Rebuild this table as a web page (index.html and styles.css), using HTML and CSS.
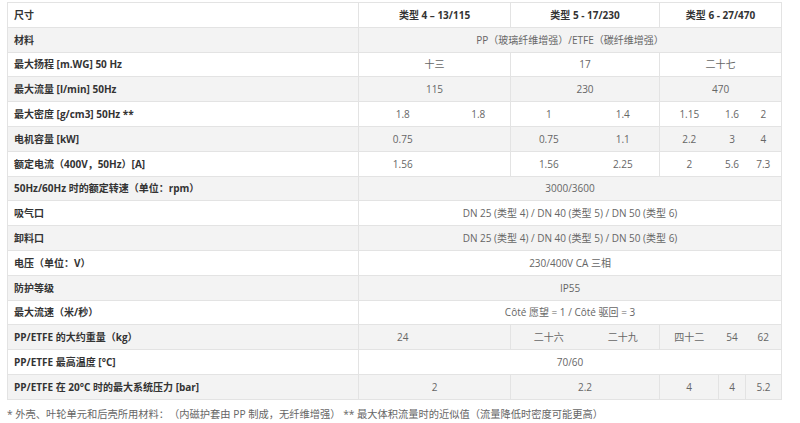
FILE: index.html
```html
<!DOCTYPE html>
<html lang="zh">
<head>
<meta charset="utf-8">
<link rel="stylesheet" href="styles.css">
</head>
<body>
<div class="page">
<table class="spec">
<colgroup>
<col class="w-label"><col class="w-a"><col class="w-b"><col class="w-c"><col class="w-d"><col class="w-e"><col class="w-f"><col class="w-g">
</colgroup>
<tbody>
<tr class="head"><td class="lbl">尺寸</td><td colspan="2">类型 4 – 13/115</td><td colspan="2">类型 5 - 17/230</td><td colspan="3">类型 6 - 27/470</td></tr>
<tr class="alt"><td class="lbl">材料</td><td colspan="7">PP（玻璃纤维增强）/ETFE（碳纤维增强）</td></tr>
<tr><td class="lbl">最大扬程 [m.WG] 50 Hz</td><td colspan="2">十三</td><td colspan="2">17</td><td colspan="3">二十七</td></tr>
<tr class="alt"><td class="lbl">最大流量 [l/min] 50Hz</td><td colspan="2">115</td><td colspan="2">230</td><td colspan="3">470</td></tr>
<tr><td class="lbl">最大密度 [g/cm3] 50Hz **</td><td>1.8</td><td class="c">1.8</td><td>1</td><td class="c">1.4</td><td>1.15</td><td class="c">1.6</td><td class="c">2</td></tr>
<tr class="alt"><td class="lbl">电机容量 [kW]</td><td>0.75</td><td class="c"></td><td>0.75</td><td class="c">1.1</td><td>2.2</td><td class="c">3</td><td class="c">4</td></tr>
<tr><td class="lbl">额定电流（400V，50Hz）[A]</td><td>1.56</td><td class="c"></td><td>1.56</td><td class="c">2.25</td><td>2</td><td class="c">5.6</td><td class="c">7.3</td></tr>
<tr class="alt"><td class="lbl">50Hz/60Hz 时的额定转速（单位：rpm）</td><td colspan="7">3000/3600</td></tr>
<tr><td class="lbl">吸气口</td><td colspan="7">DN 25 (类型 4) / DN 40 (类型 5) / DN 50 (类型 6)</td></tr>
<tr class="alt"><td class="lbl">卸料口</td><td colspan="7">DN 25 (类型 4) / DN 40 (类型 5) / DN 50 (类型 6)</td></tr>
<tr><td class="lbl">电压（单位：V）</td><td colspan="7">230/400V CA 三相</td></tr>
<tr class="alt"><td class="lbl">防护等级</td><td colspan="7">IP55</td></tr>
<tr><td class="lbl">最大流速（米/秒）</td><td colspan="7">Côté 愿望 = 1 / Côté 驱回 = 3</td></tr>
<tr class="alt"><td class="lbl">PP/ETFE 的大约重量（kg）</td><td>24</td><td class="c"></td><td>二十六</td><td class="c">二十九</td><td>四十二</td><td class="c">54</td><td class="c">62</td></tr>
<tr><td class="lbl">PP/ETFE 最高温度 [°C]</td><td colspan="7">70/60</td></tr>
<tr class="alt"><td class="lbl">PP/ETFE 在 20°C 时的最大系统压力 [bar]</td><td colspan="2">2</td><td colspan="2">2.2</td><td>4</td><td>4</td><td>5.2</td></tr>
</tbody>
</table>
<p class="note">* 外壳、叶轮单元和后壳所用材料：（内磁护套由 PP 制成，无纤维增强） ** 最大体积流量时的近似值（流量降低时密度可能更高）</p>
</div>
</body>
</html>
```
FILE: styles.css
```css
html, body {
  margin: 0;
  padding: 0;
  background: #ffffff;
}

body {
  font-family: "Open Sans", "Noto Sans CJK SC", sans-serif;
  font-size: 10px;
  color: #666666;
  text-spacing-trim: space-all;
}

.page {
  padding: 2px 19px 0 7px;
}

.spec {
  width: 774px;
  table-layout: fixed;
  border-collapse: collapse;
  border: 1px solid #e3e3e3;
}

.w-label { width: 351px; }
.w-a { width: 88px; }
.w-b { width: 64px; }
.w-c { width: 76px; }
.w-d { width: 73px; }
.w-e { width: 59px; }
.w-f { width: 27px; }
.w-g { width: 36px; }

.spec td {
  height: 23.8px;
  padding: 0;
  text-align: center;
  vertical-align: middle;
  white-space: nowrap;
  border-top: 1px solid #e3e3e3;
  border-bottom: 1px solid #e3e3e3;
  border-left: 1px solid #e3e3e3;
  line-height: 14px;
}

.spec td.c {
  border-left: 0;
}

.spec td.lbl {
  text-align: left;
  padding-left: 6px;
  font-weight: 700;
  color: #333333;
}

.spec tr.head td {
  font-weight: 700;
  color: #333333;
}

.spec tr.alt td {
  background: #f3f3f3;
}

.note {
  margin: 7px 0 0 0;
  font-size: 10.25px;
  line-height: 14px;
  color: #666666;
}
```
